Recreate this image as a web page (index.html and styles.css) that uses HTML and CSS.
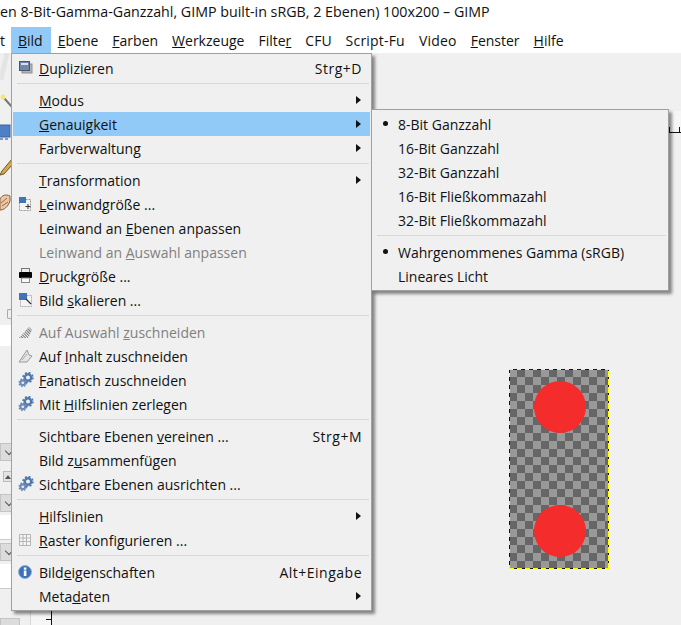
FILE: index.html
```html
<!DOCTYPE html>
<html lang="de">
<head>
<meta charset="utf-8">
<title>GIMP</title>
<link rel="stylesheet" href="styles.css">
</head>
<body>
<svg class="defs" width="0" height="0" aria-hidden="true">
  <symbol id="gears" viewBox="0 0 16 16">
    <circle cx="10" cy="5.5" r="3.2" fill="none" stroke="#4f78ad" stroke-width="2.4"/>
    <circle cx="10" cy="5.5" r="4.9" fill="none" stroke="#4f78ad" stroke-width="1.6" stroke-dasharray="2 1.85"/>
    <circle cx="4.8" cy="10.8" r="2.3" fill="none" stroke="#6c8bb5" stroke-width="2"/>
    <circle cx="4.8" cy="10.8" r="3.7" fill="none" stroke="#6c8bb5" stroke-width="1.4" stroke-dasharray="1.6 1.3"/>
  </symbol>
  <pattern id="hatch" width="2" height="2" patternUnits="userSpaceOnUse" patternTransform="rotate(45)">
    <rect width="2" height="1" fill="#777"/>
  </pattern>
</svg>
<div class="title">en 8-Bit-Gamma-Ganzzahl, GIMP built-in sRGB, 2 Ebenen) 100x200 – GIMP</div>
<nav class="menubar">
  <span class="top first">t</span>
  <span class="top active"><u>B</u>ild</span>
  <span class="top"><u>E</u>bene</span>
  <span class="top"><u>F</u>arben</span>
  <span class="top"><u>W</u>erkzeuge</span>
  <span class="top">Filte<u>r</u></span>
  <span class="top">CFU</span>
  <span class="top wide">Script-Fu</span>
  <span class="top wide">Video</span>
  <span class="top"><u>F</u>enster</span>
  <span class="top"><u>H</u>ilfe</span>
</nav>
<main class="workspace">
  <aside class="dock">
    <svg class="tools" width="30" height="162" viewBox="0 0 30 162">
      <path d="M7 0 L1 27" stroke="#e4e4e4" stroke-width="5" fill="none"/>
      <path d="M4 45 L12 54" stroke="#777" stroke-width="2"/>
      <circle cx="3" cy="44" r="2.5" fill="#f4e67a"/>
      <rect x="-2" y="72" width="12" height="12" fill="#4d80c4" stroke="#39659f"/>
      <path d="M0 86h3M5 86h3" stroke="#5d7fa8" stroke-width="1.5"/>
      <path d="M12 106 L2 118 L0 122 L4 121 L12 112Z" fill="#d6a94c" stroke="#6b5523"/>
      <path d="M0 146 C2 142 6 141 10 143 L10 148 C8 154 4 157 0 157Z" fill="#e9c9a8" stroke="#8a5f3c"/>
      <path d="M1 150 L7 145M2 153 L8 149" stroke="#a0683f"/>
    </svg>
    <div class="bracket"></div>
    <div class="field tall"></div>
    <div class="combo first-combo"></div>
    <div class="spin"><svg width="8" height="10" viewBox="0 0 8 10"><path d="M1 7 L4 3 L7 7Z" fill="#555"/></svg></div>
    <div class="combo"></div>
    <div class="field"></div>
    <div class="combo"></div>
    <div class="field"></div>
    <div class="combo last-combo"></div>
  </aside>
  <div class="main">
    <div class="ruler-h"></div>
    <div class="view">
      <div class="ruler-v"></div>
      <div class="canvas-area">
        <div class="image">
          <span class="dot"></span>
          <span class="dot"></span>
        </div>
      </div>
    </div>
  </div>
</main>
<div class="menu main-menu">
  <div class="item">
    <i class="ic"><svg width="16" height="16" viewBox="0 0 16 16"><rect x="4" y="4" width="10" height="9" fill="#b4b4b4" stroke="#8f8f8f"/><rect x="1.5" y="1.5" width="10" height="9" fill="#6f89ad" stroke="#4b5563"/><rect x="3" y="3" width="7" height="2" fill="#d8e0ea"/></svg></i>
    <span class="label"><u>D</u>uplizieren</span><span class="key">Strg+D</span>
  </div>
  <div class="sep"></div>
  <div class="item"><i class="ic"></i><span class="label"><u>M</u>odus</span><b class="arrow"></b></div>
  <div class="item hot"><i class="ic"></i><span class="label"><u>G</u>enauigkeit</span><b class="arrow"></b></div>
  <div class="item"><i class="ic"></i><span class="label">Farbverwaltung</span><b class="arrow"></b></div>
  <div class="sep"></div>
  <div class="item"><i class="ic"></i><span class="label"><u>T</u>ransformation</span><b class="arrow"></b></div>
  <div class="item">
    <i class="ic"><svg width="16" height="16" viewBox="0 0 16 16"><rect x="1.5" y="3.5" width="11" height="11" fill="#f4f4f4" stroke="#999" stroke-dasharray="2 1"/><rect x="1" y="1" width="7" height="6" fill="#3f74b8"/><path d="M10 8v5M7.5 10.5h5" stroke="#333"/></svg></i>
    <span class="label"><u>L</u>einwandgröße ...</span>
  </div>
  <div class="item"><i class="ic"></i><span class="label">Leinwand an <u>E</u>benen anpassen</span></div>
  <div class="item off"><i class="ic"></i><span class="label">Leinwand an <u>A</u>uswahl anpassen</span></div>
  <div class="item">
    <i class="ic"><svg width="16" height="16" viewBox="0 0 16 16"><rect x="3.5" y="0.5" width="8" height="4" fill="#eee" stroke="#777"/><rect x="1" y="4" width="13" height="6" rx="1" fill="#000"/><rect x="3.5" y="10" width="8" height="4.5" fill="#fafafa" stroke="#888"/></svg></i>
    <span class="label"><u>D</u>ruckgröße ...</span>
  </div>
  <div class="item">
    <i class="ic"><svg width="16" height="16" viewBox="0 0 16 16"><rect x="2.5" y="3.5" width="11" height="11" fill="#f4f4f4" stroke="#aaa" stroke-dasharray="2 1"/><rect x="1" y="1" width="8" height="7" fill="#3f74b8"/><path d="M8 7 L13 12" stroke="#333" stroke-width="1.2"/></svg></i>
    <span class="label">Bild <u>s</u>kalieren ...</span>
  </div>
  <div class="sep"></div>
  <div class="item off">
    <i class="ic"><svg width="16" height="16" viewBox="0 0 16 16"><path d="M1 14 L11 3 L14 6 L10 14Z" fill="url(#hatch)"/></svg></i>
    <span class="label">Auf Auswahl <u>z</u>uschneiden</span>
  </div>
  <div class="item">
    <i class="ic"><svg width="16" height="16" viewBox="0 0 16 16"><path d="M1 14 L9 2 L11 7 L14 8 L9 14Z" fill="#e4e4e4" stroke="#999"/><path d="M4 12 L9 6" stroke="#aaa"/></svg></i>
    <span class="label">Auf <u>I</u>nhalt zuschneiden</span>
  </div>
  <div class="item">
    <i class="ic"><svg width="16" height="16"><use href="#gears"/></svg></i>
    <span class="label"><u>F</u>anatisch zuschneiden</span>
  </div>
  <div class="item">
    <i class="ic"><svg width="16" height="16"><use href="#gears"/></svg></i>
    <span class="label">Mit <u>H</u>ilfslinien zerlegen</span>
  </div>
  <div class="sep"></div>
  <div class="item"><i class="ic"></i><span class="label">Sichtbare Ebenen <u>v</u>ereinen ...</span><span class="key">Strg+M</span></div>
  <div class="item"><i class="ic"></i><span class="label">Bild z<u>u</u>sammenfügen</span></div>
  <div class="item">
    <i class="ic"><svg width="16" height="16"><use href="#gears"/></svg></i>
    <span class="label">Sicht<u>b</u>are Ebenen ausrichten ...</span>
  </div>
  <div class="sep"></div>
  <div class="item"><i class="ic"></i><span class="label"><u>H</u>ilfslinien</span><b class="arrow"></b></div>
  <div class="item">
    <i class="ic"><svg width="16" height="16" viewBox="0 0 16 16"><path d="M1.5 2.5h11v11h-11zM5 2.5v11M8.5 2.5v11M1.5 6h11M1.5 9.5h11" fill="#f6f6f6" stroke="#b5b5b5"/></svg></i>
    <span class="label"><u>R</u>aster konfigurieren ...</span>
  </div>
  <div class="sep"></div>
  <div class="item">
    <i class="ic"><svg width="16" height="16" viewBox="0 0 16 16"><circle cx="7" cy="8" r="6.5" fill="#3c70b8" stroke="#8fb0dc"/><rect x="5.8" y="6.5" width="2.6" height="5.5" fill="#fff"/><rect x="5.8" y="3.5" width="2.6" height="2.2" fill="#fff"/></svg></i>
    <span class="label">Bild<u>e</u>igenschaften</span><span class="key">Alt+Eingabe</span>
  </div>
  <div class="item"><i class="ic"></i><span class="label">Meta<u>d</u>aten</span><b class="arrow"></b></div>
</div>
<div class="menu sub-menu">
  <div class="item"><i class="bullet on"></i><span class="label">8-Bit Ganzzahl</span></div>
  <div class="item"><i class="bullet"></i><span class="label">16-Bit Ganzzahl</span></div>
  <div class="item"><i class="bullet"></i><span class="label">32-Bit Ganzzahl</span></div>
  <div class="item"><i class="bullet"></i><span class="label">16-Bit Fließkommazahl</span></div>
  <div class="item"><i class="bullet"></i><span class="label">32-Bit Fließkommazahl</span></div>
  <div class="sep"></div>
  <div class="item"><i class="bullet on"></i><span class="label">Wahrgenommenes Gamma (sRGB)</span></div>
  <div class="item"><i class="bullet"></i><span class="label">Lineares Licht</span></div>
</div>
</body>
</html>
```
FILE: styles.css
```css
html, body { margin: 0; padding: 0; }
body {
  width: 681px; height: 625px; overflow: hidden; position: relative;
  font-family: "Open Sans", sans-serif; font-size: 14px; color: #111; background: #f0f0f0;
}
.defs { display: block; height: 0; }
.title { height: 27px; line-height: 24px; background: #fff; font-size: 14.25px; white-space: nowrap; overflow: hidden; }
.menubar { height: 26px; display: flex; background: #fff; line-height: 28px; }
.top { padding: 0 7px; white-space: nowrap; }
.top.first { padding: 0 7px 0 0; width: 4px; }
.top.active { background: #91c9f7; padding-right: 8px; }
.top.wide { letter-spacing: .2px; }

.workspace { height: 572px; display: flex; }
.dock { width: 30px; flex: none; border-right: 1px solid #d8d8d8; box-sizing: content-box; }
.tools { display: block; }
.bracket { width: 10px; height: 10px; margin: 94px 0 0 7px; border: 1px solid #aaa; border-right: 0; border-radius: 2px 0 0 2px; box-sizing: border-box; }
.field { height: 24px; background: #fff; border-bottom: 1px solid #ccc; margin-top: 3px; }
.field.tall { height: 21px; margin-top: 6px; border: 0; }
.combo { height: 18px; background: #dcdcdc; border: 1px solid #c4c4c4; box-sizing: border-box; margin-top: 3px; width: 30px; position: relative; }
.combo::after { content: ""; position: absolute; left: 5px; top: 4px; width: 5px; height: 5px; border-right: 1px solid #555; border-bottom: 1px solid #555; transform: rotate(45deg); }
.first-combo { margin-top: 97px; }
.last-combo { margin-top: 29px; width: 20px; }
.spin { margin: 10px 0 0 3px; width: 10px; height: 11px; background: #e4e4e4; border: 1px solid #bbb; box-sizing: border-box; display: flex; margin-bottom: 12px; }

.main { flex: 1; min-width: 0; padding-top: 58px; box-sizing: border-box; }
.ruler-h {
  height: 22px; box-sizing: border-box; background: #f6f6f6; border-bottom: 1px solid #111;
  margin-left: 21px; position: relative;
}
.ruler-h::before, .ruler-h::after { content: ""; position: absolute; bottom: 0; width: 1px; height: 5px; background: #111; }
.ruler-h::before { right: 11px; }
.ruler-h::after { right: 1px; }
.view { display: flex; height: 492px; }
.ruler-v { width: 21px; flex: none; box-sizing: border-box; border-right: 1px solid #111; position: relative; background: #f6f6f6; }
.ruler-v::after { content: ""; position: absolute; right: 0; bottom: 5px; width: 5px; height: 1px; background: #111; }
.canvas-area { flex: 1; padding: 236px 0 0 457px; }
.image {
  width: 100px; height: 200px; box-sizing: border-box;
  background-color: #666;
  background-image:
    repeating-linear-gradient(90deg, #ff0 0 4px, #111 4px 8px),
    repeating-linear-gradient(90deg, #ff0 0 5px, #111 5px 8px),
    repeating-linear-gradient(0deg, #ff0 0 4px, #111 4px 8px),
    repeating-linear-gradient(0deg, #ff0 0 6px, #111 6px 8px),
    conic-gradient(#666 25%, #999 0 50%, #666 0 75%, #999 0);
  background-size: 100% 1px, 100% 1px, 1px 100%, 1px 100%, 16px 16px;
  background-position: 0 0, 0 100%, 0 0, 100% 0, 0 0;
  background-repeat: no-repeat, no-repeat, no-repeat, no-repeat, repeat;
  display: flex; flex-direction: column; align-items: center; gap: 72px; padding: 12px 0 0 2px;
}
.dot { width: 52px; height: 52px; border-radius: 50%; background: #f52c2c; flex: none; }

.menu {
  position: absolute; box-sizing: border-box; background: #f0f0f0;
  border: 1px solid #a0a0a0; padding: 2px 1px; box-shadow: 3px 3px 3px rgba(0,0,0,.45);
}
.main-menu { left: 11px; top: 53px; width: 361px; height: 558px; }
.sub-menu { left: 371px; top: 109px; width: 298px; height: 182px; }
.item { height: 24px; box-sizing: border-box; padding-top: 2px; line-height: 22px; display: flex; align-items: center; white-space: nowrap; }
.item.hot { background: #91c9f7; }
.item.off { color: #808080; }
.ic { width: 26px; flex: none; padding-left: 5px; box-sizing: border-box; height: 16px; margin-bottom: 2px; display: block; }
.ic svg { display: block; }
.label { flex: 1; }
.key { padding-right: 8px; letter-spacing: .5px; }
.arrow { width: 0; height: 0; border-left: 5px solid #111; border-top: 4px solid transparent; border-bottom: 4px solid transparent; margin: 0 9px 3px 0; }
.sep { height: 1px; background: #d7d7d7; margin: 3px 1px 4px 4px; }
.bullet { width: 25px; flex: none; display: block; }
.bullet.on::before { content: ""; display: block; width: 5px; height: 5px; border-radius: 50%; background: #111; margin: 0 0 4px 10px; }
```
